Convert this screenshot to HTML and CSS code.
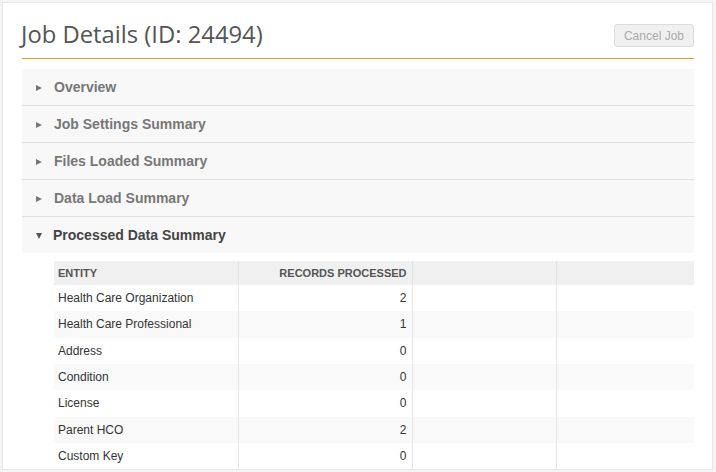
FILE: index.html
```html
<!DOCTYPE html>
<html>
<head>
<meta charset="utf-8">
<link rel="stylesheet" href="styles.css">
</head>
<body>
<div class="card">
  <div class="header">
    <h1 class="title">Job Details (ID: 24494)</h1>
    <button class="btn">Cancel Job</button>
  </div>
  <div class="accordion">
    <div class="acc-row"><span class="arrow right"></span><span class="acc-label">Overview</span></div>
    <div class="acc-row"><span class="arrow right"></span><span class="acc-label">Job Settings Summary</span></div>
    <div class="acc-row"><span class="arrow right"></span><span class="acc-label">Files Loaded Summary</span></div>
    <div class="acc-row"><span class="arrow right"></span><span class="acc-label">Data Load Summary</span></div>
    <div class="acc-row open"><span class="arrow down"></span><span class="acc-label">Processed Data Summary</span></div>
    <div class="panel">
      <table class="grid">
        <colgroup>
          <col class="c1"><col class="c2"><col class="c3"><col class="c4">
        </colgroup>
        <thead>
          <tr><th class="left">ENTITY</th><th class="right">RECORDS PROCESSED</th><th></th><th></th></tr>
        </thead>
        <tbody>
          <tr><td>Health Care Organization</td><td class="num">2</td><td></td><td></td></tr>
          <tr><td>Health Care Professional</td><td class="num">1</td><td></td><td></td></tr>
          <tr><td>Address</td><td class="num">0</td><td></td><td></td></tr>
          <tr><td>Condition</td><td class="num">0</td><td></td><td></td></tr>
          <tr><td>License</td><td class="num">0</td><td></td><td></td></tr>
          <tr><td>Parent HCO</td><td class="num">2</td><td></td><td></td></tr>
          <tr><td>Custom Key</td><td class="num">0</td><td></td><td></td></tr>
        </tbody>
      </table>
    </div>
  </div>
</div>
</body>
</html>
```

FILE: styles.css
```css
html, body {
  margin: 0;
  padding: 0;
  background: #f4f4f4;
  height: 472px;
  overflow: hidden;
}
body {
  padding: 2px 3px 0 2px;
  box-sizing: border-box;
  font-family: "Liberation Sans", Arial, sans-serif;
}
.card {
  background: #fff;
  border: 1px solid #e8e8e8;
  height: 468px;
  box-sizing: border-box;
  padding: 0 18px 0 19px;
  overflow: hidden;
}
.header {
  display: flex;
  align-items: flex-end;
  justify-content: space-between;
  height: 56px;
  box-sizing: border-box;
  padding-bottom: 9px;
  border-bottom: 1px solid #f7941e;
}
.title {
  margin: 0 0 0 -1px;
  font-family: "Open Sans", sans-serif;
  font-weight: 400;
  font-size: 23.8px;
  color: #555;
  line-height: 30px;
}
.btn {
  font-family: "Liberation Sans", Arial, sans-serif;
  font-size: 12px;
  color: #aaa;
  background: #f0f0f0;
  border: 1px solid #dcdcdc;
  border-radius: 3px;
  height: 23px;
  padding: 0 9px;
  margin-bottom: 2px;
}
.accordion {
  margin-top: 10px;
}
.acc-row {
  display: flex;
  align-items: center;
  height: 36px;
  background: #f8f8f8;
  border-bottom: 1px solid #e0e0e0;
  padding-left: 14px;
}
.acc-row.open {
  border-bottom: none;
}
.arrow {
  width: 0;
  height: 0;
  margin-right: 12px;
}
.arrow.right {
  border-top: 3.5px solid transparent;
  border-bottom: 3.5px solid transparent;
  border-left: 6px solid #777;
  margin-top: 1px;
}
.arrow.down {
  border-left: 3.5px solid transparent;
  border-right: 3.5px solid transparent;
  border-top: 6px solid #555;
  margin-right: 11px;
  margin-top: 2px;
}
.acc-label {
  font-size: 14px;
  font-weight: bold;
  color: #777;
}
.acc-row.open .acc-label {
  color: #444;
}
.panel {
  padding: 8px 0 0 32px;
}
.grid {
  width: 100%;
  border-collapse: collapse;
  table-layout: fixed;
}
.c1 { width: 184px; }
.c2 { width: 174px; }
.c3 { width: 144px; }
.c4 { width: auto; }
.grid th {
  height: 24px;
  background: #f0f0f0;
  font-size: 11px;
  font-weight: bold;
  color: #555;
  padding: 0 5px 0 4px;
  border-left: 1px solid #e2e2e2;
}
.grid th:first-child, .grid td:first-child {
  border-left: none;
}
.grid th.left { text-align: left; }
.grid th.right { text-align: right; }
.grid td {
  height: 26.33px;
  padding: 0 5px 0 4px;
  font-size: 12px;
  color: #333;
  border-left: 1px solid #e6e6e6;
  box-sizing: border-box;
}
.grid tbody tr:nth-child(even) td {
  background: #f9f9f9;
}
.grid td.num {
  text-align: right;
}
```
